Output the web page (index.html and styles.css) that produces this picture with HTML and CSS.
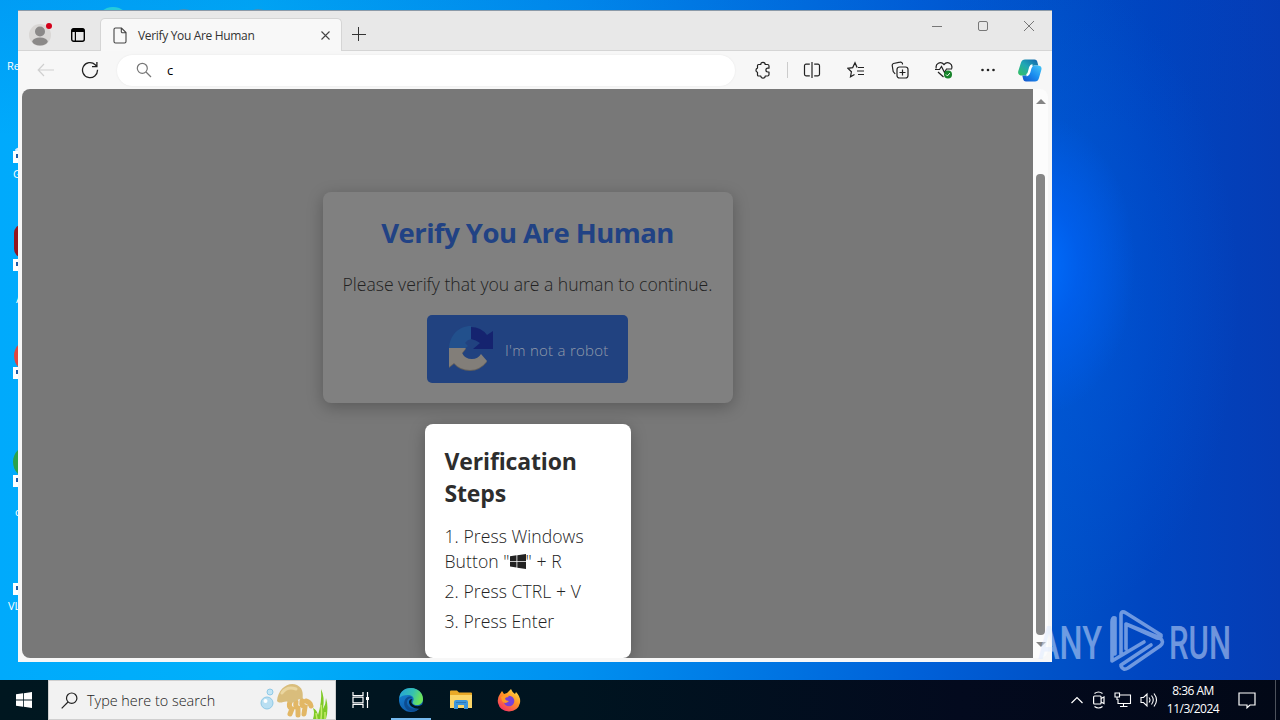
FILE: index.html
```html
<!DOCTYPE html>
<html lang="en">
<head>
    <meta charset="UTF-8">
    <meta name="viewport" content="width=device-width, initial-scale=1.0">
    <title>Verify You Are Human</title>
    <link rel="stylesheet" href="styles.css">
</head>
<body>
<div class="desktop">
    <div class="shape teal"></div>
    <div class="shape gray one"></div>
    <div class="shape gray two"></div>
    <span class="label l1">Re</span>
    <i class="app shield"></i><i class="shortcut s1"></i><span class="label l2">G</span>
    <i class="app red"></i><i class="shortcut s2"></i><span class="label l3">A</span>
    <i class="app chrome"></i><i class="shortcut s3"></i>
    <i class="app green"></i><i class="shortcut s4"></i><span class="label l4">c</span>
    <i class="shortcut s5"></i><span class="label l5">VL</span>

    <div class="window">
        <div class="tabstrip">
            <svg class="avatar" width="24" height="24" viewBox="0 0 24 24">
                <circle cx="11" cy="13" r="11" fill="#d9d7d5"/>
                <circle cx="11" cy="9.500" r="5" fill="#8b8988"/>
                <ellipse cx="11" cy="19.500" rx="7.700" ry="4" fill="#8b8988"/>
                <circle cx="20" cy="4" r="3" fill="#d4001a"/>
            </svg>
            <svg class="panes" width="14" height="14" viewBox="0 0 14 14" fill="none" stroke="#000">
                <rect x=".7" y=".7" width="12.600" height="12.600" rx="2" stroke-width="1.400"/>
                <path d="M1 2.400h12" stroke-width="3.200"/><path d="M4.400 3v10" stroke-width="1.200"/>
            </svg>
            <div class="tab">
                <svg width="14" height="17" viewBox="0 0 14 17" fill="none" stroke="#444" stroke-width="1.100">
                    <path d="M2.500 1h6L13 5.500V14.500a1.500 1.500 0 0 1-1.500 1.500h-9A1.500 1.500 0 0 1 1 14.500v-12A1.500 1.500 0 0 1 2.500 1zM8.300 1v3.500a1.200 1.200 0 0 0 1.200 1.200H13"/>
                </svg>
                <span class="tab-title">Verify You Are Human</span>
                <svg class="tab-close" width="9" height="9" viewBox="0 0 9 9" stroke="#444" stroke-width="1.100"><path d="M.5.5l8 8M8.500.5l-8 8"/></svg>
            </div>
            <svg class="plus" width="14" height="14" viewBox="0 0 14 14" stroke="#333"><path d="M0 7.500h14M6.500 0v14"/></svg>
            <div class="controls">
                <svg width="10" height="10" viewBox="0 0 10 10" stroke="#777"><path d="M0 5.500h10"/></svg>
                <svg width="10" height="10" viewBox="0 0 10 10" fill="none" stroke="#777"><rect x=".5" y=".5" width="9" height="9" rx="1.500"/></svg>
                <svg width="10" height="10" viewBox="0 0 10 10" stroke="#777"><path d="M0 0l10 10M10 0L0 10"/></svg>
            </div>
        </div>

        <div class="toolbar">
            <svg class="back" width="18" height="14" viewBox="0 0 18 14" fill="none" stroke="#cfcfcf" stroke-width="1.200"><path d="M17 7H1.500M7 1L1.200 7 7 13"/></svg>
            <svg class="reload" width="18" height="18" viewBox="0 0 18 18" fill="none" stroke="#222" stroke-width="1.300"><path d="M16.500 8.800A7.500 7.500 0 1 1 14.200 3.700L15.800 5.400M15.900 1v4.600H11"/></svg>
            <div class="address">
                <svg width="16" height="16" viewBox="0 0 16 16" fill="none" stroke="#777" stroke-width="1.200"><circle cx="6.300" cy="6.300" r="5"/><path d="M10 10l5 5"/></svg>
                <span>c</span>
            </div>
            <div class="tools">
                <svg width="18" height="18" viewBox="0 0 18 18" fill="none" stroke="#222" stroke-width="1.200"><path d="M4.500 3.500H6.800A2.200 2.200 0 0 1 11.200 3.500H13.500Q15 3.500 15 5V7.200H13.800A1.900 1.900 0 0 0 13.800 11H15V13.500Q15 15 13.500 15H11.200A2.200 2.200 0 0 1 6.800 15H4.500Q3.500 15 3.500 14V11.300A2.200 2.200 0 0 1 3.500 7.100V4.500Q3.500 3.500 4.500 3.500Z" stroke-linejoin="round"/></svg>
                <i class="divider"></i>
                <svg width="18" height="18" viewBox="0 0 18 18" fill="none" stroke="#222" stroke-width="1.200"><path d="M6.800 3.200H3A1.500 1.500 0 0 0 1.500 4.700v8.600A1.500 1.500 0 0 0 3 14.800h3.800M11.200 3.200H15a1.500 1.500 0 0 1 1.500 1.500v8.600A1.500 1.500 0 0 1 15 14.800h-3.800M9 1v16"/></svg>
                <svg width="18" height="18" viewBox="0 0 18 18" fill="none" stroke="#222" stroke-width="1.200"><path d="M10 6.500L8 1.800 5.700 6.600.8 7.300l3.600 3.500-.9 5L7.500 13.500M8 1.800l2.200 4.700M11 6.500h6M10 10h7M11 13.500h6"/></svg>
                <svg width="18" height="18" viewBox="0 0 18 18" fill="none" stroke="#222" stroke-width="1.200"><path d="M4.200 13L2.200 10.500 1.200 4.500A2 2 0 0 1 2.500 2.500L9 1.200A2 2 0 0 1 11.500 3.500"/><rect x="6" y="6" width="11" height="11" rx="2.500"/><path d="M11.500 8.500v6M8.500 11.500h6"/></svg>
                <svg width="18" height="18" viewBox="0 0 18 18" fill="none" stroke="#222" stroke-width="1.200"><path d="M1.300 7.500C0 3 5.500-.5 9 3.500c3.500-4 9-.5 7.700 4M0 8.500h4.500L6.500 5.500l3 6 2-3.500H17M3 11l5.500 5"/><circle cx="13" cy="13.500" r="4" fill="#17832a" stroke="none"/><path d="M11 13.500l1.400 1.400 2.500-2.800" stroke="#fff" stroke-width="1"/></svg>
                <svg width="18" height="18" viewBox="0 0 18 18" fill="#222"><circle cx="3.500" cy="9" r="1.300"/><circle cx="9" cy="9" r="1.300"/><circle cx="14.500" cy="9" r="1.300"/></svg>
            </div>
            <svg class="copilot" width="24" height="23" viewBox="0 0 24 23">
                <defs>
                    <linearGradient id="cpA" x1="0" y1="1" x2="1" y2="0"><stop offset="0" stop-color="#36c25f"/><stop offset=".5" stop-color="#20a7b5"/><stop offset="1" stop-color="#1261ac"/></linearGradient>
                    <linearGradient id="cpB" x1="0" y1="1" x2="1" y2="0"><stop offset="0" stop-color="#1450c8"/><stop offset=".5" stop-color="#1a8df0"/><stop offset="1" stop-color="#48c8f7"/></linearGradient>
                </defs>
                <path d="M7 .5h9.500q2.500 0 3 3l.8 3h-4q-2.500 0-3.200 2.500L11.500 14q-.8 2.500-3.200 2.500H4.500Q-.8 16.500.3 12L3 3.500Q4 .5 7 .5z" fill="url(#cpA)"/>
                <path d="M17 22.500H8q-2.500 0-3-3l-.7-3H8q2.700 0 3.500-2.500l1.600-5q.7-2.500 3.200-2.500h3.200q5 0 3.800 4.500L21 19q-1 3.500-4 3.500z" fill="url(#cpB)"/>
                <path d="M14.500 6.500Q13 6.500 12.200 9L11 13.500Q10.300 16 8.500 16.300" stroke="#fff" stroke-width="2.600" fill="none"/>
            </svg>
        </div>

        <div class="viewport">
            <div class="page">
                <div class="container">
                    <h1>Verify You Are Human</h1>
                    <p>Please verify that you are a human to continue.</p>
                    <div class="verify-button">
                        <svg width="48" height="50" viewBox="0 0 48 50">
                            <path d="M24 2V15Q20 16 18 19L21 22 16 26H2C2 12 11 2 24 2z" fill="#22508c"/>
                            <path d="M24 3Q34 3 40 11L46 7V25H26L33 19Q29 16 24 15z" fill="#15236f"/>
                            <path d="M2 25H19L15 30Q18 36 25 36 31 36 34 31L40 38Q33 47 23 47 13 47 7 40L2 44z" fill="#625f5c"/>
                            <path d="M2 24H19L15 29Q18 35 25 35 31 35 34 30L40 37Q33 46 23 46 13 46 7 39L2 43z" fill="#827e79"/>
                        </svg>
                        <span>I'm not a robot</span>
                    </div>
                </div>
                <div class="popup">
                    <h2>Verification Steps</h2>
                    <p>1. Press Windows<br>Button "<svg class="winkey" width="16" height="15" viewBox="0 0 16 15" fill="#222"><path d="M0 2.200l6.500-.9v5.700H0zM7.300 1.200L16 0v7H7.300zM0 7.800h6.500v5.700L0 12.600zM7.300 7.800H16V15l-8.700-1.300z"/></svg>" + R</p>
                    <p>2. Press CTRL + V</p>
                    <p>3. Press Enter</p>
                </div>
            </div>
            <div class="scrollbar">
                <i class="arrow up"></i>
                <i class="thumb"></i>
                <i class="arrow down"></i>
            </div>
        </div>
    </div>

    <svg class="watermark" width="230" height="70" viewBox="0 0 230 70">
        <g class="brand">
            <text x="3" y="50" textLength="64" lengthAdjust="spacingAndGlyphs">ANY</text>
            <text x="134" y="50" textLength="62" lengthAdjust="spacingAndGlyphs">RUN</text>
        </g>
        <path class="play" d="M80 9Q77 8 77 13V52L109 33M80 9V45M86 46V6Q86 1 91 4L126 26Q127 30 122 29L91 15M86 57Q88 62 93 59L125 37Q130 33 125 29L91 15V40M86 56L116 36"/>
    </svg>
</div>

<div class="taskbar">
    <div class="start">
        <svg width="16" height="16" viewBox="0 0 16 16" fill="#fff"><path d="M0 2.300l7-1V7.600H0zM7.800 1.200L16 0v7.600H7.800zM0 8.400h7v6.300l-7-1zM7.800 8.400H16V16l-8.200-1.200z"/></svg>
    </div>
    <div class="search">
        <svg width="17" height="17" viewBox="0 0 17 17" fill="none" stroke="#222" stroke-width="1.200"><circle cx="10.700" cy="6.200" r="5.200"/><path d="M7 10L.7 16.300"/></svg>
        <span>Type here to search</span>
        <svg class="jelly" width="70" height="38" viewBox="0 0 70 38">
            <circle cx="8" cy="22" r="6" fill="#b9dff2" stroke="#8fc9e6"/><circle cx="6.500" cy="20" r="2" fill="#fff"/>
            <circle cx="11" cy="11" r="3" fill="#c3e5f5" stroke="#8fc9e6"/>
            <g fill="none" stroke="#e2b765" stroke-width="5" stroke-linecap="round"><path d="M31 21q-2 5 2 7l-2 5M37 21q-1 5 2 6l0 7M43 20q-1 5 3 6l-1 7M47 20q4 1 5 5"/></g>
            <path d="M18 20C19 7 30 0 38 4 46 8 43 16 44 18 37 17 35 24 29 21 26 19 21 24 18 20z" fill="#d9bd7c"/>
            <path d="M23 12Q28 5 37 8" stroke="#ead6a0" stroke-width="3" fill="none" stroke-linecap="round"/>
            <path d="M54 38q2-6 0-11 4 2 5 7 4-13 3-26 4 8 2 20 3-5 3-11 3 10 0 21z" fill="#7fca27"/>
            <path d="M62 38q1-9 0-14M58 38l-1-6M66 38v-7" stroke="#c4ec6a" stroke-width="1.500" fill="none"/>
        </svg>
    </div>
    <div class="task">
        <svg width="18" height="16" viewBox="0 0 18 16" fill="none" stroke="#fff" stroke-width="1.200"><path d="M1 0v3.500h10V0M1 16v-3.500h10V16M1 5.200h10v5.600H1zM15.500 0v16"/><path d="M14 6.500h3" stroke-width="3"/></svg>
    </div>
    <div class="task active">
        <svg width="26" height="26" viewBox="0 0 26 26">
            <defs>
                <linearGradient id="edA" x1="0" y1="0" x2="1" y2=".3"><stop offset="0" stop-color="#249fdc"/><stop offset=".6" stop-color="#35c1b1"/><stop offset="1" stop-color="#6be35b"/></linearGradient>
                <linearGradient id="edB" x1="0" y1="0" x2=".4" y2="1"><stop offset="0" stop-color="#1687d7"/><stop offset="1" stop-color="#0f5cab"/></linearGradient>
            </defs>
            <circle cx="13" cy="13" r="12" fill="url(#edB)"/>
            <path d="M1.300 11C2 4 7 1 13 1c7 0 12 5 12 11 0 4-3 6-6 6-4 0-5-2-4-3.500 2-4-1-6.500-5-6.500-4 0-7 1-8.700 3z" fill="url(#edA)"/>
            <path d="M14 11.500c-3-1-5 1-5 4 0 5 6 8 13 5-4 5-10 5-14 1-4-5-1-12 4-12 1.500 0 2 1 2 2z" fill="#0c4c91"/>
            <path d="M14.500 12c-2 2-1.500 5.500 3 7 3 .5 5-.5 6-1.200l2 .2-1.500 3.200c-6 2-13-1.700-13-6.200 0-2 1.500-3 3.500-3z" fill="#001620"/>
        </svg>
    </div>
    <div class="task explorer">
        <svg width="22" height="20" viewBox="0 0 22 20">
            <path d="M0 1.500Q0 .5 1 .5h6l2 2h12q1 0 1 1V18H0z" fill="#e9a928"/>
            <path d="M0 5h22v13H0z" fill="#fbd568"/>
            <path d="M4 19v-7q0-2 2-2h10q2 0 2 2v7h-4v-4H8v4z" fill="#3c96dc"/>
            <path d="M6 12.500h10" stroke="#2c79b9"/>
        </svg>
    </div>
    <div class="task">
        <svg width="24" height="24" viewBox="0 0 24 24">
            <defs><linearGradient id="ff" x1=".9" y1="0" x2=".2" y2="1"><stop offset="0" stop-color="#ffe54a"/><stop offset=".45" stop-color="#ff9425"/><stop offset="1" stop-color="#f52c68"/></linearGradient></defs>
            <path d="M3 6L5 3l2 3 3-1L14 1q1 3 4 5l1-2q5 5 4 11-2 8-11 8.500Q3 23 1 15 0 10 3 6z" fill="url(#ff)"/>
            <circle cx="12" cy="13" r="5.300" fill="#7641d8"/>
            <path d="M4 9q5-4 8 0-4 0-4 2 1 2 4 2-4 4-7 0z" fill="#ff9a24"/>
        </svg>
    </div>
    <div class="tray">
        <svg width="14" height="10" viewBox="0 0 14 10" fill="none" stroke="#fff" stroke-width="1.200"><path d="M1.500 8L7 2.500 12.500 8"/></svg>
        <svg width="14" height="18" viewBox="0 0 14 18" fill="none" stroke="#fff" stroke-width="1.200"><rect x="1.600" y="5" width="7.500" height="8" rx="1"/><path d="M9 7.500l3-1.500v6.500L9 11M2.500 2.500Q6.500-.5 10.500 2.500M2.500 15.500q4 3 8 0"/></svg>
        <svg width="18" height="16" viewBox="0 0 18 16" fill="none" stroke="#fff" stroke-width="1.100"><path d="M6 3h10.500v8.500H4V7M9.500 11.500v3M6 14.500h7.500"/><path d="M1 1h4.500v4H1zM3 5v3"/></svg>
        <svg width="18" height="16" viewBox="0 0 18 16" fill="none" stroke="#fff" stroke-width="1.100"><path d="M1 5.500h2.500L7 2v12l-3.500-3.500H1zM9 5.500q2 2.500 0 5M11.500 3.500q3.500 4.500 0 9M14 1.500q5 6.500 0 13"/></svg>
        <div class="clock"><span>8:36 AM</span><span>11/3/2024</span></div>
        <svg width="18" height="18" viewBox="0 0 18 18" fill="none" stroke="#fff" stroke-width="1.200"><path d="M1 2h16v12h-5l-3 2.800V14H1z"/></svg>
        <i class="peek"></i>
    </div>
</div>
</body>
</html>
```

FILE: styles.css
```css
* {
    box-sizing: border-box;
}
body {
    margin: 0;
    width: 1280px;
    height: 720px;
    display: flex;
    flex-direction: column;
    overflow: hidden;
    font-family: "Open Sans", "Noto Sans", sans-serif;
    color: #222;
}
svg {
    display: block;
    flex: none;
}
h1, h2, p {
    margin: 0;
}

/* desktop */
.desktop {
    position: relative;
    height: 680px;
    overflow: hidden;
    background:
        radial-gradient(ellipse 95px 150px at 1040px 265px, rgba(0, 110, 255, 0.95), rgba(0, 100, 250, 0.6) 40%, rgba(0, 90, 235, 0) 100%),
        radial-gradient(ellipse 200px 330px at 1040px 300px, rgba(0, 92, 225, 0.6), rgba(0, 80, 210, 0) 100%),
        linear-gradient(to bottom, rgba(0, 60, 190, 0.12), rgba(0, 60, 190, 0) 20%),
        linear-gradient(to right, #00aafc 0, #00b0fa 20%, #0090f0 45%, #0060d8 72%, #0052c8 82%, #0045c0 90%, #053cb4 100%);
}
.shape, .app, .shortcut, .label {
    position: absolute;
}
.teal {
    left: 97px;
    top: 7px;
    width: 32px;
    height: 30px;
    border-radius: 50%;
    background: #25cbdc;
}
.gray {
    top: 9px;
    width: 24px;
    height: 20px;
    border-radius: 50%;
    background: #4b8fb4;
}
.one { left: 172px; }
.two { left: 246px; }
.app {
    left: 14px;
    width: 34px;
    height: 34px;
    border-radius: 50%;
}
.shield {
    top: 146px;
    left: 15px;
    height: 8px;
    background: #d5efff;
}
.red {
    top: 224px;
    border-radius: 9px;
    background: #94151f;
}
.chrome {
    top: 339px;
    background: #e0463e;
}
.green {
    top: 445px;
    left: 13px;
    background: #2ba24c;
}
.shortcut {
    left: 13px;
    width: 11px;
    height: 12px;
    background: #fff;
    border: 3px solid #fff;
}
.shortcut::after {
    content: "";
    display: block;
    width: 5px;
    height: 4px;
    background: #1d5ba6;
}
.s1 { top: 151px; }
.s2 { top: 259px; }
.s3 { top: 367px; }
.s4 { top: 475px; }
.s5 { top: 583px; }
.label {
    font-size: 11px;
    line-height: 16px;
    color: #fff;
}
.l1 { left: 7px; top: 58px; }
.l2 { left: 13px; top: 166px; }
.l3 { left: 16px; top: 291px; }
.l4 { left: 15px; top: 504px; }
.l5 { left: 8px; top: 598px; }

/* browser window */
.window {
    position: absolute;
    left: 18px;
    top: 10px;
    width: 1034px;
    height: 652px;
    display: flex;
    flex-direction: column;
    background: #f7f7f7;
    border-top: 1px solid #8c9aa8;
}
.tabstrip {
    display: flex;
    align-items: center;
    height: 40px;
    padding-left: 11px;
    background: #e8e8e8;
    border-bottom: 1px solid #d5d5d5;
}
.avatar {
    margin-top: 7px;
}
.panes {
    margin: 8px 0 0 18px;
}
.tab {
    display: flex;
    align-items: center;
    align-self: flex-end;
    width: 242px;
    height: 33px;
    margin: 0 0 -1px 15px;
    padding: 0 11px 0 12px;
    background: #f8f8f8;
    border: 1px solid #d5d5d5;
    border-bottom: 0;
    border-radius: 5px 5px 0 0;
}
.tab-title {
    margin-left: 11px;
    font-size: 12px;
    letter-spacing: -0.33px;
    color: #333;
}
.tab-close {
    margin-left: auto;
}
.plus {
    margin: 7px 0 0 10px;
}
.controls {
    display: flex;
    align-self: flex-start;
    gap: 36px;
    margin: 10px 18px 0 auto;
}
.toolbar {
    display: flex;
    align-items: center;
    height: 38px;
    padding: 0 10px 0 19px;
}
.reload {
    margin-left: 26px;
}
.address {
    display: flex;
    align-items: center;
    width: 618px;
    height: 31px;
    margin-left: 18px;
    padding-left: 19px;
    border-radius: 16px;
    background: #fff;
    box-shadow: 0 0 2px rgba(0, 0, 0, 0.08);
}
.address span {
    margin-left: 15px;
    font-size: 13px;
    color: #000;
}
.tools {
    display: flex;
    align-items: center;
    gap: 26px;
    margin-left: 19px;
}
.divider {
    width: 1px;
    height: 16px;
    margin: 0 -11px;
    background: #ccc;
}
.copilot {
    margin-left: auto;
}
.viewport {
    display: flex;
    height: 569px;
    padding: 0 4px;
}
.page {
    display: flex;
    flex-direction: column;
    align-items: center;
    width: 1011px;
    padding-top: 103px;
    overflow: hidden;
    border-radius: 8px 0 0 8px;
    background: #787878;
}
.container {
    display: flex;
    flex-direction: column;
    align-items: center;
    width: 410px;
    height: 211px;
    padding-top: 20px;
    border-radius: 8px;
    background: #808080;
    box-shadow: 0 4px 16px rgba(0, 0, 0, 0.26);
}
.container h1 {
    font-size: 27.5px;
    line-height: 42px;
    letter-spacing: -0.55px;
    color: #214284;
}
.container p {
    margin: 18px 0;
    font-size: 17.6px;
    font-weight: 300;
    line-height: 25px;
    letter-spacing: -0.02px;
    white-space: nowrap;
}
.verify-button {
    display: flex;
    align-items: center;
    width: 201px;
    height: 68px;
    padding-left: 20px;
    border-radius: 5px;
    background: #214280;
}
.verify-button span {
    margin: 2px 0 0 10px;
    font-size: 15px;
    font-weight: 300;
    letter-spacing: 0.27px;
    color: #929baa;
    white-space: nowrap;
}
.popup {
    width: 206px;
    height: 234px;
    margin-top: 21px;
    padding: 21px 20px 0;
    border-radius: 8px;
    background: #fff;
    box-shadow: 0 4px 16px rgba(0, 0, 0, 0.26);
}
.popup h2 {
    margin-bottom: 15px;
    font-size: 23px;
    line-height: 32px;
    letter-spacing: -0.15px;
    color: #2d2d2d;
}
.popup p {
    margin-bottom: 5px;
    font-size: 17.6px;
    font-weight: 300;
    line-height: 25px;
    letter-spacing: 0.05px;
    white-space: nowrap;
}
.winkey {
    display: inline-block;
    vertical-align: -1px;
}
.scrollbar {
    display: flex;
    flex-direction: column;
    align-items: center;
    width: 15px;
    padding: 10px 0;
    background: #fcfcfc;
    border-radius: 0 8px 8px 0;
}
.arrow {
    border: 5px solid transparent;
}
.up {
    border-top: 0;
    border-bottom: 5px solid #858585;
}
.down {
    border-bottom: 0;
    border-top: 5px solid #858585;
}
.thumb {
    width: 9px;
    height: 461px;
    margin: 70px 0 7px;
    border-radius: 4px;
    background: #868686;
}
.watermark {
    position: absolute;
    left: 1035px;
    top: 609px;
}
.brand {
    font: 500 47px "Roboto", "Liberation Sans", sans-serif;
    fill: #dce9ff;
    fill-opacity: 0.5;
}
.play {
    fill: none;
    stroke: #dce9ff;
    stroke-opacity: 0.5;
    stroke-width: 3.6;
    stroke-linejoin: round;
    stroke-linecap: round;
}

/* taskbar */
.taskbar {
    display: flex;
    height: 40px;
    color: #fff;
    background: linear-gradient(to right, #001720, #001420 45%, #030a1e 75%, #020817);
}
.start, .task {
    display: flex;
    align-items: center;
    justify-content: center;
    width: 48px;
}
.search {
    display: flex;
    align-items: center;
    width: 288px;
    padding: 0 6px 0 12px;
    border: 1px solid #cfcfcf;
    background: #f2f2f2;
    color: #222;
}
.search span {
    margin-left: 9px;
    font-size: 14.4px;
    font-weight: 300;
    white-space: nowrap;
}
.jelly {
    margin-left: auto;
}
.task {
    width: 49px;
}
.active {
    position: relative;
    width: 52px;
}
.active::after {
    content: "";
    position: absolute;
    left: 6px;
    bottom: 0;
    width: 40px;
    height: 2px;
    background: #76b9ed;
}
.explorer {
    width: 47px;
}
.tray {
    display: flex;
    align-items: center;
    gap: 8px;
    margin-left: auto;
}
.clock {
    display: flex;
    flex-direction: column;
    align-items: center;
    width: 54px;
    margin-right: 10px;
    font-size: 12px;
    line-height: 18px;
    letter-spacing: -0.5px;
    white-space: nowrap;
}
.peek {
    align-self: stretch;
    width: 5px;
    margin-left: 11px;
    border-left: 1px solid #4d525c;
}
```
